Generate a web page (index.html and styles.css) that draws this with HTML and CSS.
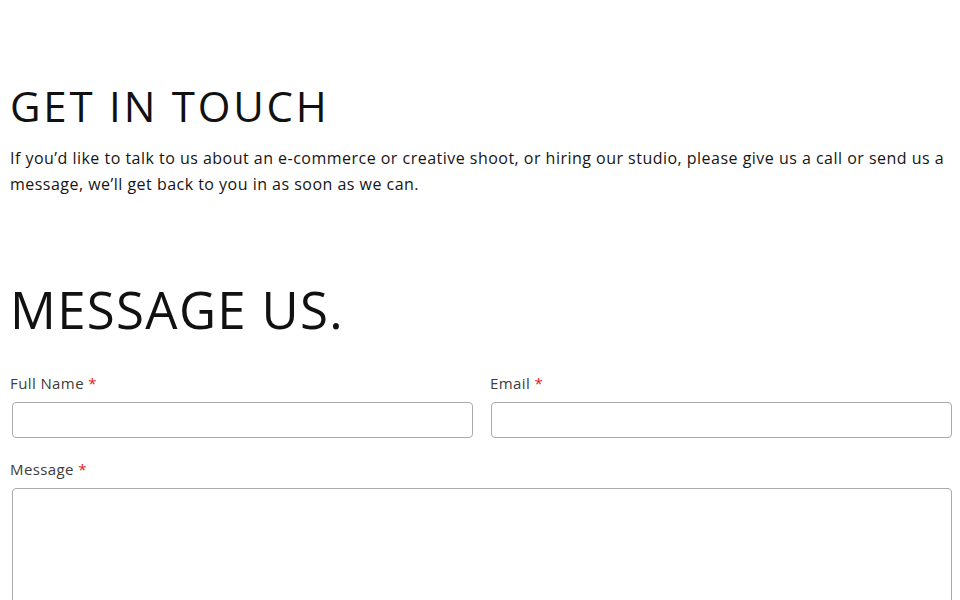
FILE: index.html
```html
<!DOCTYPE html>
<html lang="en">
<head>
<meta charset="utf-8">
<title>Contact</title>
<link rel="stylesheet" href="styles.css">
</head>
<body>
<main class="page">
  <section class="intro">
    <h1 class="title">GET IN TOUCH</h1>
    <p class="lead">If you’d like to talk to us about an e-commerce or creative shoot, or hiring our studio, please give us a call or send us a message, we’ll get back to you in as soon as we can.</p>
  </section>
  <section class="contact">
    <h2 class="title title-lg">MESSAGE US.</h2>
    <form class="form">
      <div class="row">
        <label class="field">
          <span class="label">Full Name <span class="req">*</span></span>
          <input class="input" type="text">
        </label>
        <label class="field field-right">
          <span class="label">Email <span class="req">*</span></span>
          <input class="input" type="email">
        </label>
      </div>
      <label class="field">
        <span class="label">Message <span class="req">*</span></span>
        <textarea class="input textarea"></textarea>
      </label>
    </form>
  </section>
</main>
</body>
</html>
```
FILE: styles.css
```css
html, body {
  margin: 0;
  padding: 0;
  background: #fff;
}
body {
  font-family: "Open Sans", "DejaVu Sans", sans-serif;
  color: #111;
}
.page {
  padding: 0 10px;
  width: 940px;
}
.intro {
  padding-top: 81px;
}
.title {
  margin: 0;
  font-weight: 400;
  font-size: 42px;
  line-height: 50px;
  letter-spacing: 2.8px;
  color: #111;
}
.lead {
  margin: 14px 0 0;
  font-size: 16px;
  line-height: 26px;
  letter-spacing: 0.48px;
  color: #151515;
}
.contact {
  padding-top: 82px;
}
.title-lg {
  font-size: 51px;
  line-height: 60px;
  letter-spacing: 1.3px;
}
.form {
  margin-top: 34px;
  display: flex;
  flex-direction: column;
  gap: 21px;
}
.row {
  display: grid;
  grid-template-columns: 460px 460px;
  gap: 20px;
}
.field {
  display: flex;
  flex-direction: column;
  gap: 9px;
}
.label {
  font-size: 15px;
  line-height: 20px;
  letter-spacing: 0.4px;
  color: #3c3c3c;
}
.req {
  color: #e02020;
}
.input {
  box-sizing: border-box;
  margin-left: 2px;
  width: 461px;
  height: 36px;
  border: 1px solid #aaa;
  border-radius: 4px;
  background: #fff;
  font: inherit;
}
.field-right .input {
  margin-left: 1px;
}
.textarea {
  width: 940px;
  height: 160px;
  resize: none;
}
```
